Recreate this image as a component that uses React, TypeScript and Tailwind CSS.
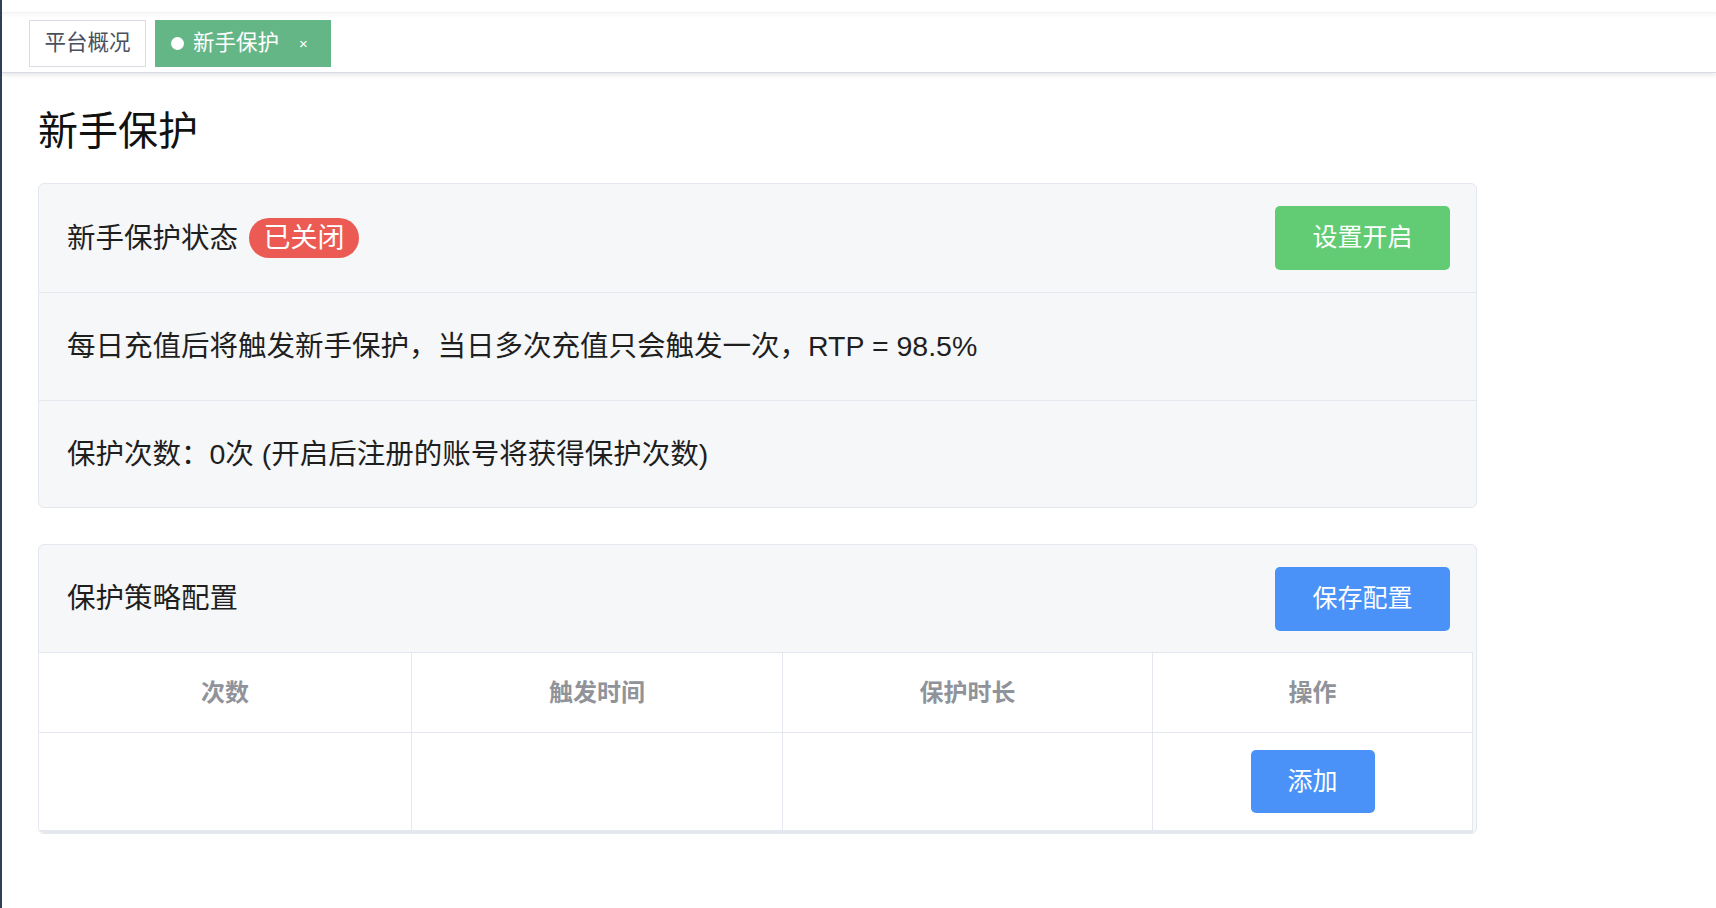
const font = "font-['Liberation_Sans','Noto_Sans_CJK_SC',sans-serif]";

const columns = ["次数", "触发时间", "保护时长", "操作"];

export default function App() {
  return (
    <div className={`flex min-h-screen bg-white text-[#1f1f1f] ${font}`}>
      {/* sidebar edge */}
      <div className="w-[2px] shrink-0 bg-[#304156]" />

      <div className="flex-1">
        {/* Tabs */}
        <div className="pt-[12px]">
          <div className="flex h-[61px] items-center gap-[9px] border-b border-[#d8dce5] bg-white pl-[27px] pt-[2px] shadow-[inset_0_7px_6px_-6px_rgba(0,0,0,0.07),0_2px_4px_rgba(0,0,0,0.1)]">
            <div className="flex h-[47px] w-[117px] items-center justify-center border border-[#d8dce5] text-[21.5px] text-[#495060]">
              平台概况
            </div>
            <div className="flex h-[47px] w-[176px] items-center bg-[#64b687] pl-[16px] text-[21.5px] text-white">
              <span className="h-[13px] w-[13px] rounded-full bg-white" />
              <span className="ml-[9px]">新手保护</span>
              <span className="ml-[20px] text-[15px] leading-none">×</span>
            </div>
          </div>
        </div>

        <div className="pl-[36px]">
          <h1 className="mt-[34px] text-[40px] leading-[48px] text-[#111]">新手保护</h1>

          {/* Status card */}
          <div className="mt-[28px] w-[1439px] overflow-hidden rounded-[6px] border border-[#e4e7ed] bg-[#f6f7f9] text-[28.5px]">
            <div className="flex h-[108px] items-center justify-between pl-[28px] pr-[26px]">
              <div className="flex items-center">
                <span>新手保护状态</span>
                <span className="ml-[11px] flex h-[40px] w-[110px] items-center justify-center rounded-full bg-[#ec5a54] text-[27px] text-white">
                  已关闭
                </span>
              </div>
              <button className="h-[64px] w-[175px] rounded-[5px] bg-[#61cc73] text-[25px] text-white">
                设置开启
              </button>
            </div>
            <div className="flex h-[108px] items-center border-t border-[#e4e7ed] pl-[28px]">
              每日充值后将触发新手保护，当日多次充值只会触发一次，RTP = 98.5%
            </div>
            <div className="flex h-[107px] items-center border-t border-[#e4e7ed] pl-[28px]">
              保护次数：0次 (开启后注册的账号将获得保护次数)
            </div>
          </div>

          {/* Strategy card */}
          <div className="mt-[36px] w-[1439px] overflow-hidden rounded-[6px] border border-[#e4e7ed] bg-[#f6f7f9]">
            <div className="flex h-[107px] items-center justify-between pl-[28px] pr-[26px]">
              <span className="text-[28.5px]">保护策略配置</span>
              <button className="h-[64px] w-[175px] rounded-[5px] bg-[#4a92f7] text-[25px] text-white">
                保存配置
              </button>
            </div>
            <div className="mr-[3px] border-t border-r border-b-[3px] border-[#e4e7ed] bg-white">
              <div className="grid h-[80px] grid-cols-[372px_371px_370px_1fr] border-b border-[#e4e7ed]">
                {columns.map((c, i) => (
                  <div
                    key={c}
                    className={`flex items-center justify-center text-[24px] font-bold text-[#909399] ${
                      i > 0 ? "border-l border-[#e4e7ed]" : ""
                    }`}
                  >
                    {c}
                  </div>
                ))}
              </div>
              <div className="grid h-[97px] grid-cols-[372px_371px_370px_1fr]">
                <div />
                <div className="border-l border-[#e4e7ed]" />
                <div className="border-l border-[#e4e7ed]" />
                <div className="flex items-center justify-center border-l border-[#e4e7ed]">
                  <button className="h-[63px] w-[124px] rounded-[5px] bg-[#4a92f7] text-[25px] text-white">
                    添加
                  </button>
                </div>
              </div>
            </div>
          </div>
        </div>
      </div>
    </div>
  );
}
